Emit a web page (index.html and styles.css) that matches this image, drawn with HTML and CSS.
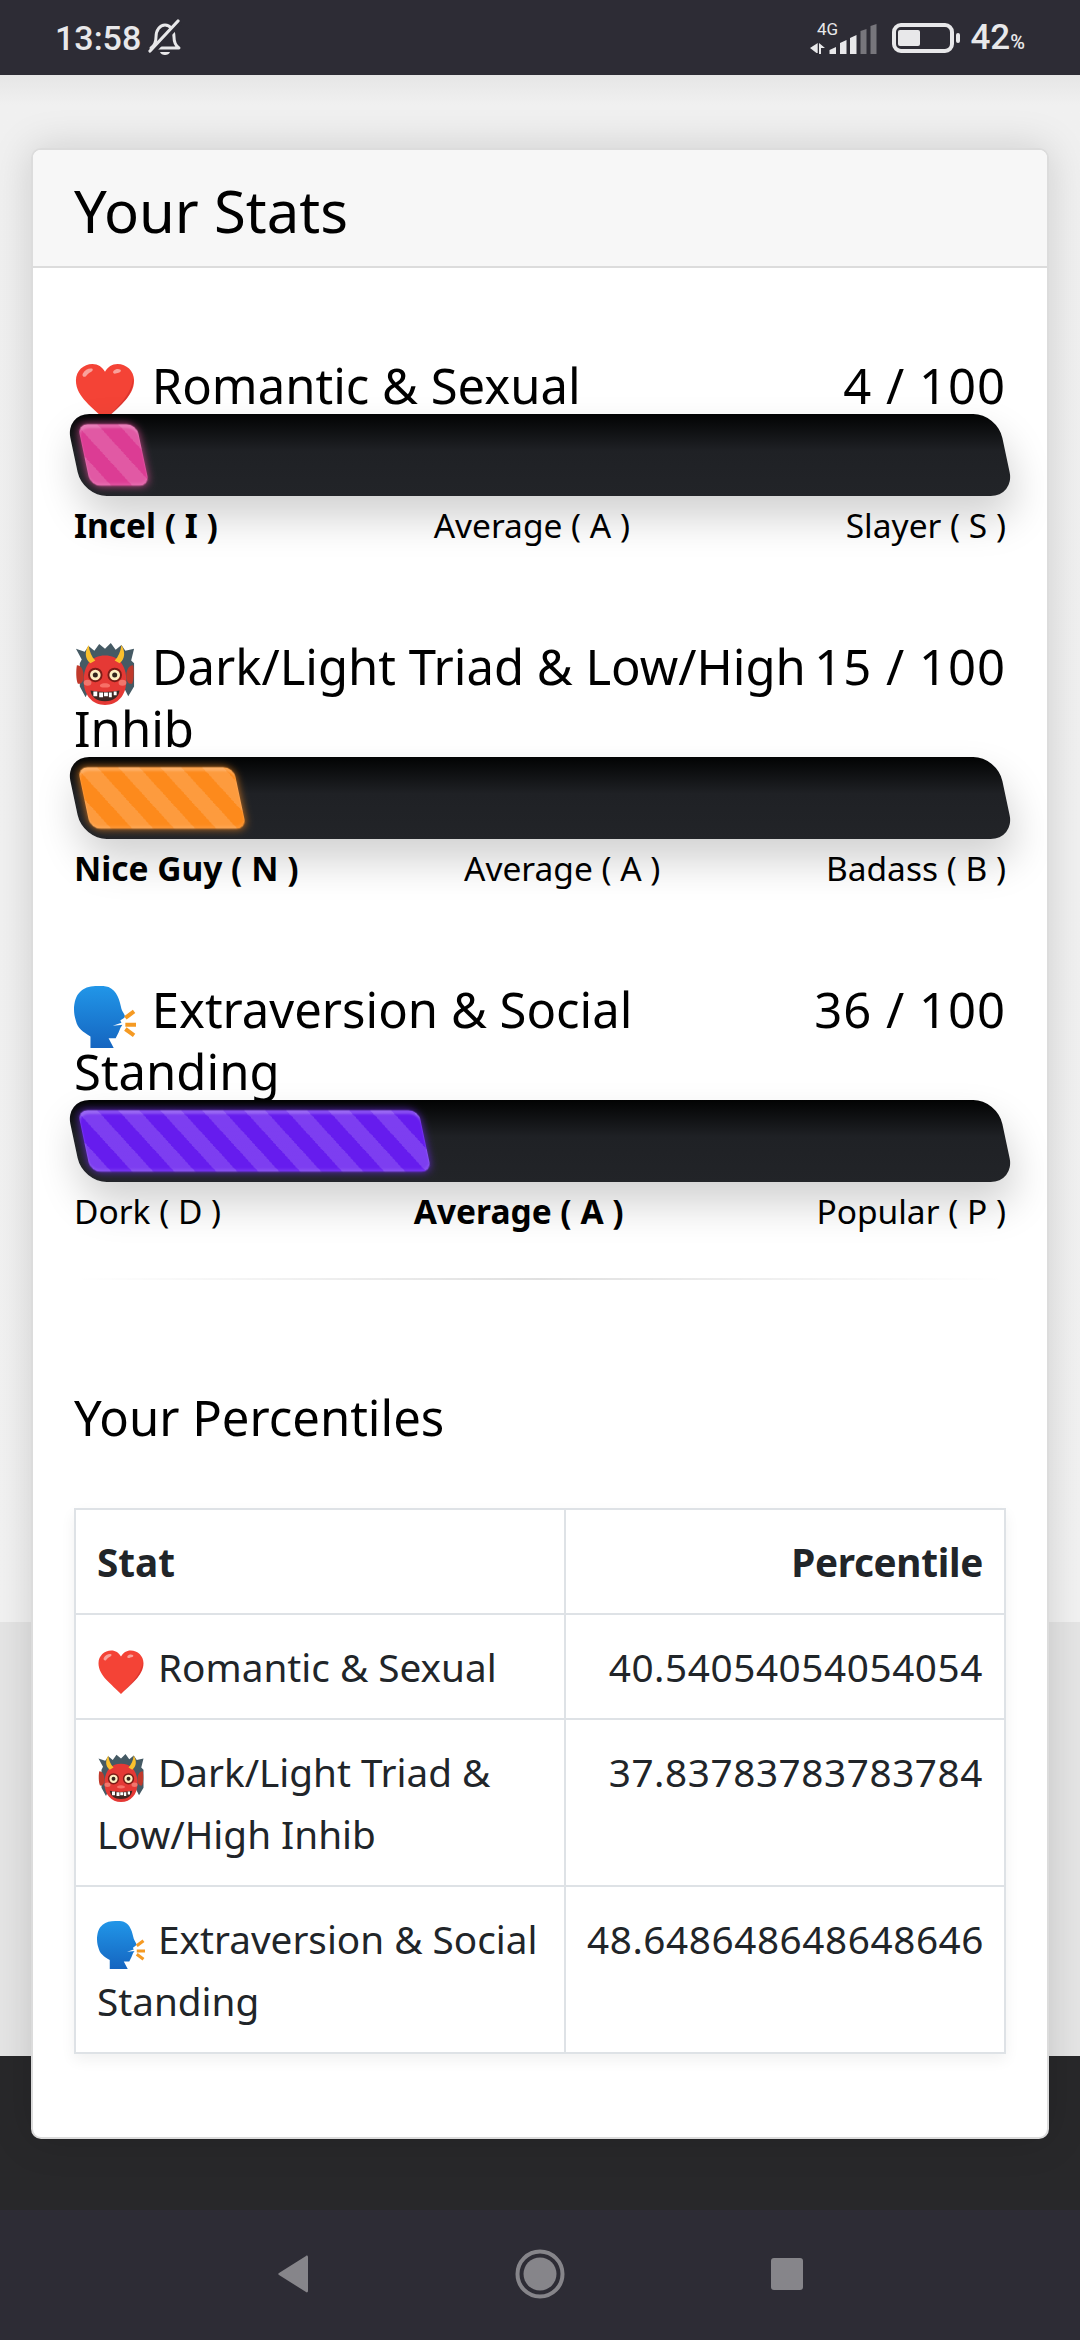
FILE: index.html
```html
<!DOCTYPE html>
<html lang="en">
  <head>
    <meta charset="UTF-8" />
    <meta name="viewport" content="width=device-width, initial-scale=1.0" />
    <title>Your Stats</title>
    <link rel="stylesheet" href="styles.css">
  </head>
  <body>
    <svg class="defs" width="0" height="0">
      <defs>
        <linearGradient id="head-fill" x1="0" y1="0" x2="0" y2="1">
          <stop offset="0" stop-color="#2196e8"/>
          <stop offset="1" stop-color="#1565c0"/>
        </linearGradient>
        <symbol id="e-heart" viewBox="0 0 64 64">
          <path d="M32 60C20 47 2 36 2 19 2 9 10 2 19 2c6 0 10 3 13 8 3-5 7-8 13-8 9 0 17 7 17 17 0 17-18 28-30 41z" fill="#f44336"/>
          <path d="M9 12c2-4 7-6 10-5 1 1 0 3-3 4-2 1-3 3-4 4-2 1-4-1-3-3zM41 9c2-2 5-2 7-1 1 1 0 3-2 3-1 0-3 1-4 1-2 0-2-2-1-3z" fill="#f9a29b"/>
          <path d="M32 60C38 52 60 36 61 16c2 20-18 33-29 44z" fill="#c62828" opacity=".55"/>
        </symbol>
        <symbol id="e-ogre" viewBox="0 0 64 64">
          <path d="M2 6l9 3 4-6 6 5 5-7 6 5 6-6 5 7 6-5 4 6 9-2-3 12 3 3 0 24-6 10-4-8-36 0-4 9-6-11 0-24 2-4z" fill="#455a64"/>
          <path d="M3 23c5 0 7 6 7 11s-2 9-6 8c-2-4-2-14-1-19zM61 23c-5 0-7 6-7 11s2 9 6 8c2-4 2-14 1-19z" fill="#c0392b"/>
          <path d="M32 13c14 0 22 10 22 26 0 15-9 25-22 25S10 54 10 39c0-16 8-26 22-26z" fill="#e53935"/>
          <path d="M15 2c-4 7-4 14 2 19l5-3c-4-4-6-9-7-16zM49 2c4 7 4 14-2 19l-5-3c4-4 6-9 7-16z" fill="#fbc02d"/>
          <ellipse cx="14" cy="41" rx="4" ry="3" fill="#f1766c"/><ellipse cx="50" cy="41" rx="4" ry="3" fill="#f1766c"/>
          <circle cx="22" cy="33" r="7.5" fill="#7b1c17"/><circle cx="42" cy="33" r="7.5" fill="#7b1c17"/>
          <circle cx="22" cy="33" r="5.5" fill="#ffefc2"/><circle cx="42" cy="33" r="5.5" fill="#ffefc2"/>
          <circle cx="22" cy="33" r="2.6" fill="#33261f"/><circle cx="42" cy="33" r="2.6" fill="#33261f"/>
          <path d="M27 43c3-2 7-2 10 0 1 2-1 3-5 3s-6-1-5-3z" fill="#f77067"/>
          <path d="M17 49c10 2 20 2 30 0-1 7-6 11-15 11s-14-4-15-11z" fill="#3e2723"/>
          <path d="M20 50h4v5h-4zM26 51h4v5h-4zM31 51h4v4h-4zM36 51h3v5h-3zM41 50h3v4h-3z" fill="#fff"/>
        </symbol>
        <symbol id="e-head" viewBox="0 0 64 64">
          <path d="M35.7 1C40 3 43 6 45 10.5c2 4 3 9 4 13.2 1 3 3 5 3.6 7.3.2 2-3 3-4.800 4.700L50 40l-2 3-2 5-3 6h-7.300L41 64H17V52C9 47 4 44 2 36 0 30 0 26 0 22 1 13 3 9 7.500 5 12 1 18 0 24.400 0c4 0 8 0 11.300 1z" fill="url(#head-fill)"/>
          <path d="M40 41l12-4-1 3z" fill="#fff"/>
          <path d="M53 33l9-6.700M53 40h11M53 44.400l9 6.600" stroke="#f59a23" stroke-width="4.200" fill="none"/>
        </symbol>
      </defs>
    </svg>

    <div class="pantalla">
      <div class="barra-estado">
        <div class="estado-lado">
          <span class="hora">13:58</span>
          <svg class="ico-sino" viewBox="0 0 34 37" width="34" height="37">
            <path d="M3 29c3-2 5-5 5-11 0-7 4-12 9-12s9 5 9 12c0 6 2 9 5 11z" fill="none" stroke="#e8e8ea" stroke-width="3" stroke-linejoin="round"/>
            <path d="M12 33h10c-1 4-9 4-10 0z" fill="#e8e8ea"/>
            <path d="M4 33L32 3" stroke="#2d2c35" stroke-width="6"/>
            <path d="M2 32L30 2" stroke="#e8e8ea" stroke-width="3.200" stroke-linecap="round"/>
          </svg>
        </div>
        <div class="estado-lado">
          <svg class="ico-senal" viewBox="0 -6 68 39" width="68" height="39">
            <text x="7" y="13" class="txt-4g">4G</text>
            <path d="M7.700 21v10H6.500L0 26z" fill="#e8e8ea"/>
            <path d="M9 21v11h2v-6h4z" fill="#e8e8ea"/>
            <path d="M19.500 32v-4l6.500-3v7zM30 32V21l6.500-3v14zM40 32V16l6.500-3v19z" fill="#e8e8ea"/>
            <path d="M50.500 32V9l6-2v25zM60.500 32V4l6-2v30z" fill="#77767c"/>
          </svg>
          <svg class="ico-bateria" viewBox="0 0 68 30" width="68" height="30">
            <rect x="2" y="2" width="58" height="26" rx="7" fill="none" stroke="#e8e8ea" stroke-width="4"/>
            <rect x="6" y="7" width="22" height="16" rx="2" fill="#e8e8ea"/>
            <rect x="64" y="10" width="4" height="10" rx="2" fill="#e8e8ea"/>
          </svg>
          <span class="pct">42<small>%</small></span>
        </div>
      </div>

      <main class="contenido">
        <section class="tarjeta">
          <div class="tarjeta-header">Your Stats</div>
          <div class="tarjeta-body">

            <div class="stat">
              <div class="stat-titulo">
                <span class="stat-nombre"><svg class="emoji"><use href="#e-heart"/></svg> Romantic &amp; Sexual</span>
                <span class="stat-valor">4 / 100</span>
              </div>
              <div class="barra"><div class="relleno rosa" style="width: 59px"></div></div>
              <div class="niveles">
                <span class="activo">Incel ( I )</span>
                <span>Average ( A )</span>
                <span>Slayer ( S )</span>
              </div>
            </div>

            <div class="stat">
              <div class="stat-titulo">
                <span class="stat-nombre"><svg class="emoji"><use href="#e-ogre"/></svg> Dark/Light Triad &amp; Low/High Inhib</span>
                <span class="stat-valor">15 / 100</span>
              </div>
              <div class="barra"><div class="relleno naranja" style="width: 156px"></div></div>
              <div class="niveles">
                <span class="activo">Nice Guy ( N )</span>
                <span>Average ( A )</span>
                <span>Badass ( B )</span>
              </div>
            </div>

            <div class="stat">
              <div class="stat-titulo">
                <span class="stat-nombre"><svg class="emoji"><use href="#e-head"/></svg> Extraversion &amp; Social Standing</span>
                <span class="stat-valor">36 / 100</span>
              </div>
              <div class="barra"><div class="relleno morado" style="width: 341px"></div></div>
              <div class="niveles">
                <span>Dork ( D )</span>
                <span class="activo">Average ( A )</span>
                <span>Popular ( P )</span>
              </div>
            </div>

            <hr class="separador" />

            <h5 class="subtitulo">Your Percentiles</h5>

            <table class="tabla">
              <thead>
                <tr><th>Stat</th><th class="num">Percentile</th></tr>
              </thead>
              <tbody>
                <tr>
                  <td><svg class="emoji chico"><use href="#e-heart"/></svg> Romantic &amp; Sexual</td>
                  <td class="num">40.54054054054054</td>
                </tr>
                <tr>
                  <td><svg class="emoji chico"><use href="#e-ogre"/></svg> Dark/Light Triad &amp; Low/High Inhib</td>
                  <td class="num">37.83783783783784</td>
                </tr>
                <tr>
                  <td><svg class="emoji chico"><use href="#e-head"/></svg> Extraversion &amp; Social Standing</td>
                  <td class="num">48.648648648648646</td>
                </tr>
              </tbody>
            </table>
          </div>
        </section>
      </main>

      <div class="barra-nav">
        <svg viewBox="0 0 32 38" width="32" height="38"><path d="M31 2v34c0 1-1 2-2 1L2 20c-1-1-1-1 0-2L29 1c1-1 2 0 2 1z" fill="#86858a"/></svg>
        <svg viewBox="0 0 50 50" width="50" height="50"><circle cx="25" cy="25" r="22.500" fill="none" stroke="#86858a" stroke-width="4"/><circle cx="25" cy="25" r="16.500" fill="#86858a"/></svg>
        <svg viewBox="0 0 32 32" width="32" height="32"><rect width="32" height="32" rx="3" fill="#86858a"/></svg>
      </div>
    </div>
  </body>
</html>
```

FILE: styles.css
```css
* {
  margin: 0;
  padding: 0;
  box-sizing: border-box;
}

body {
  background-color: #2d2c35;
  font-family: "Noto Sans", sans-serif;
  color: #212529;
  width: 1080px;
  height: 2340px;
  overflow: hidden;
}

.defs {
  display: block;
  height: 0;
}

.pantalla {
  height: 2340px;
  display: flex;
  flex-direction: column;
}

/* Barra de estado */
.barra-estado {
  height: 75px;
  flex-shrink: 0;
  background-color: #2d2c35;
  color: #e8e8ea;
  padding: 0 55px 0 55px;
  display: flex;
  align-items: center;
  justify-content: space-between;
}

.estado-lado {
  display: flex;
  align-items: center;
  gap: 10px;
}

.hora {
  font-family: Roboto, sans-serif;
  font-size: 34px;
  font-weight: 500;
}

.ico-sino {
  margin-left: -3px;
}

.pct {
  font-family: Roboto, sans-serif;
  font-size: 35px;
  font-weight: 500;
}

.pct small {
  font-size: 20px;
}

.txt-4g {
  font-family: Roboto, sans-serif;
  font-size: 17px;
  fill: #e8e8ea;
}

.ico-senal {
  margin-right: 4px;
  margin-bottom: 4px;
}

/* Contenido */
.contenido {
  flex: 1;
  padding: 73px 31px 0;
  background: linear-gradient(
    #e6e6e6 0,
    #f0f0f0 30px,
    #f2f2f2 1547px,
    #e5e5e5 1547px,
    #e5e5e5 1981px,
    #28282a 1981px
  );
}

.tarjeta {
  height: 1991px;
  background-color: white;
  border: 2px solid #dcdcdc;
  border-radius: 10px;
  overflow: hidden;
  box-shadow: 0 0 40px rgba(0, 0, 0, 0.15);
}

.tarjeta-header {
  height: 118px;
  padding-left: 41px;
  background-color: #f7f7f7;
  border-bottom: 2px solid #dcdcdc;
  font-size: 58px;
  line-height: 122px;
  color: black;
}

.tarjeta-body {
  padding: 84px 41px 0;
}

.stat {
  margin-bottom: 83px;
}

.stat:nth-of-type(3) {
  margin-bottom: 42px;
}

.stat-titulo {
  display: flex;
  justify-content: space-between;
  gap: 4px;
  padding-top: 2px;
  margin-bottom: -2px;
  font-size: 49px;
  line-height: 62px;
  color: black;
}

.stat-valor {
  white-space: nowrap;
  letter-spacing: 1px;
}

.emoji {
  width: 62px;
  height: 62px;
  margin: -10px 3px -10px 0;
  vertical-align: -10px;
}

.emoji.chico {
  width: 48px;
  height: 48px;
  margin: -8px 3px -8px 0;
  vertical-align: -7px;
}

.barra {
  height: 82px;
  padding: 10px;
  border-radius: 24px;
  transform: skewX(12deg);
  background: linear-gradient(#020303, #1f2125 45%, #222428);
  box-shadow: 0 22px 40px rgba(0, 0, 0, 0.18);
  position: relative;
}

.relleno {
  height: 62px;
  border-radius: 10px;
  background-image: repeating-linear-gradient(55deg, rgba(255, 255, 255, 0.15) 0 17.2px, transparent 17.2px 34.4px);
  box-shadow: inset 0 4px 2px rgba(255, 255, 255, 0.22), inset 0 -3px 2px rgba(255, 255, 255, 0.1);
}

.rosa {
  background-color: #dc3c94;
  filter: drop-shadow(0 0 4px rgba(236, 80, 160, 0.8));
}

.naranja {
  background-color: #fd8a1c;
  filter: drop-shadow(0 0 4px rgba(253, 138, 28, 0.8));
}

.morado {
  background-color: #661cee;
  filter: drop-shadow(0 0 4px rgba(110, 40, 240, 0.8));
}

.niveles {
  position: relative;
  display: flex;
  justify-content: space-between;
  font-size: 33.5px;
  line-height: 50px;
  margin-top: 4px;
  color: black;
}

.activo {
  font-weight: 700;
}

.separador {
  border: 0;
  height: 2px;
  margin: 0 0 106px;
  background: linear-gradient(to right, rgba(0, 0, 0, 0), rgba(0, 0, 0, 0.12), rgba(0, 0, 0, 0));
}

.subtitulo {
  font-size: 49px;
  font-weight: 400;
  line-height: 62px;
  color: black;
  margin-bottom: 60px;
}

.tabla {
  width: 100%;
  border-collapse: collapse;
  font-size: 38.7px;
  line-height: 62px;
  table-layout: fixed;
  box-shadow: 0 6px 14px rgba(0, 0, 0, 0.06);
}

.tabla th,
.tabla td {
  border: 2px solid #dee2e6;
  padding: 20.5px 21px;
  text-align: left;
  vertical-align: top;
}

.tabla th:first-child {
  width: 490px;
}

.tabla .num {
  text-align: right;
  letter-spacing: 0.58px;
}

.tabla th.num {
  letter-spacing: -0.3px;
}

/* Barra de navegacion */
.barra-nav {
  height: 130px;
  flex-shrink: 0;
  background-color: #2d2c35;
  display: flex;
  align-items: center;
  justify-content: center;
  gap: 206px;
  padding-bottom: 2px;
}
```
